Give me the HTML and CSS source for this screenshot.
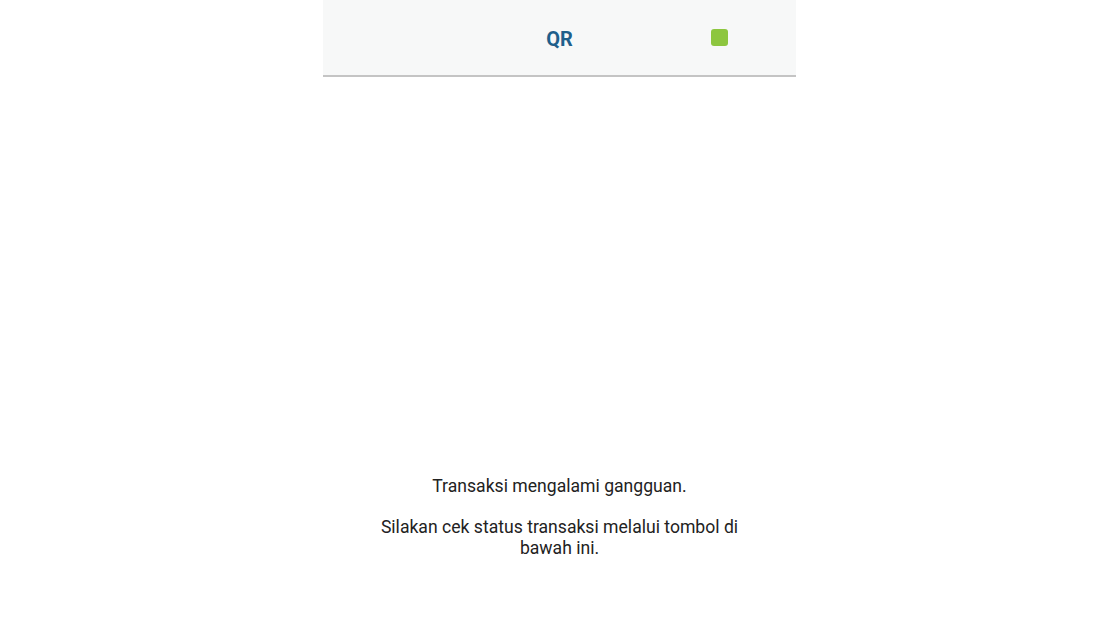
FILE: index.html
```html
<!DOCTYPE html>
<html lang="id">
<head>
<meta charset="utf-8">
<link rel="stylesheet" href="styles.css">
</head>
<body>
<div class="screen">
  <header class="topbar">
    <div class="title">QR</div>
    <div class="status-dot"></div>
  </header>
  <main class="content">
    <p class="msg">Transaksi mengalami gangguan.</p>
    <p class="msg">Silakan cek status transaksi melalui tombol di bawah ini.</p>
  </main>
</div>
</body>
</html>
```

FILE: styles.css
```css
html, body {
  margin: 0;
  padding: 0;
  background: #ffffff;
}
body {
  font-family: Roboto, "Noto Sans", sans-serif;
  color: #222222;
}
.screen {
  width: 473px;
  margin-left: 323px;
  height: 630px;
  display: flex;
  flex-direction: column;
}
.topbar {
  height: 75px;
  background: #f7f8f8;
  border-bottom: 2px solid #c4c4c4;
  display: flex;
  align-items: center;
  justify-content: center;
  position: relative;
}
.title {
  font-size: 20px;
  font-weight: 700;
  color: #1f5f8b;
  margin-top: 2px;
}
.status-dot {
  position: absolute;
  left: 388px;
  top: 29px;
  width: 17px;
  height: 17px;
  border-radius: 3px;
  background: #8dc63f;
}
.content {
  padding: 399px 40px 0;
  text-align: center;
}
.msg {
  margin: 0 0 20px;
  font-size: 17.6px;
  line-height: 21px;
}
```
